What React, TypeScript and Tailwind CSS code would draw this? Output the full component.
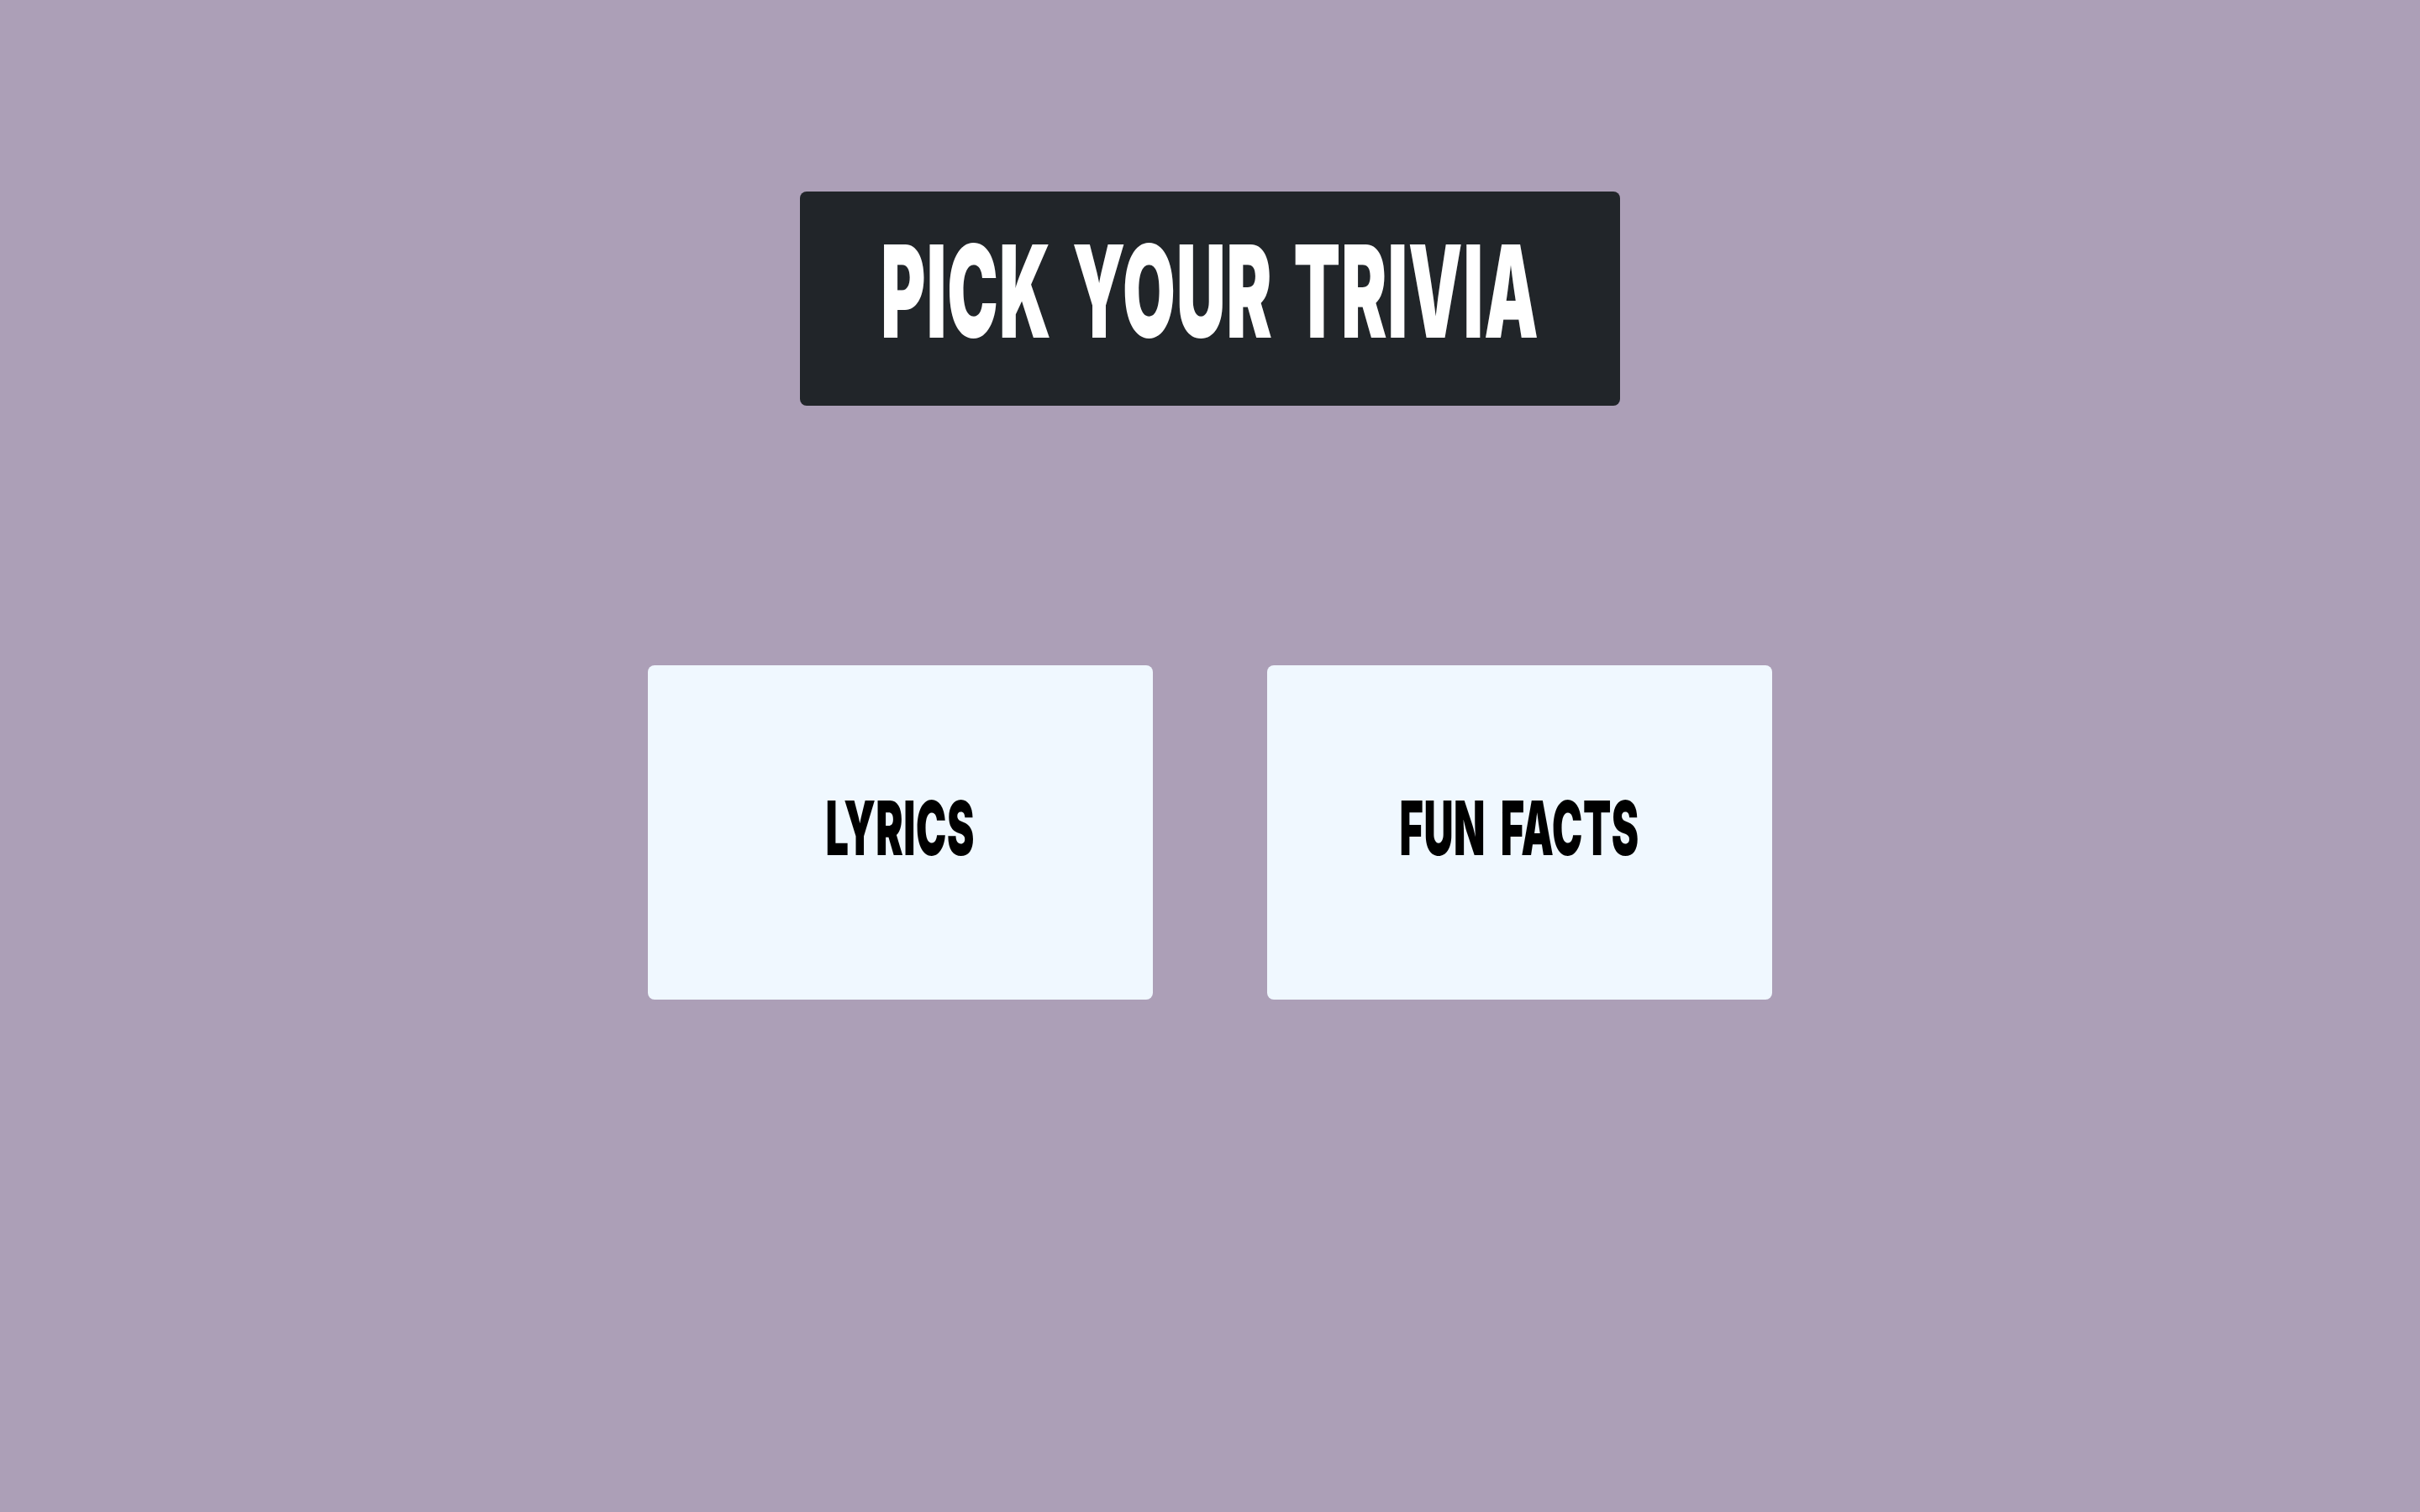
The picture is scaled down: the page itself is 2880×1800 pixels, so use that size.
export default function App() {
  return (
    <div className="min-h-screen w-full bg-[#ac9fb7] flex flex-col items-center pt-[228px] font-['Inter',sans-serif]">
      <div className="w-[976px] h-[255px] bg-[#212529] rounded-[8px] flex items-center justify-center pb-[18px]">
        <h1 className="inline-block scale-x-[0.53] text-white font-black text-[153px] leading-none tracking-[2px] [word-spacing:14px] whitespace-nowrap">
          PICK YOUR TRIVIA
        </h1>
      </div>

      <div className="mt-[309px] flex gap-[136px]">
        <button className="w-[601px] h-[398px] bg-[#f0f8ff] rounded-[8px] flex items-center justify-center pb-[10px]">
          <span className="inline-block scale-x-[0.54] text-black font-black text-[90px] leading-none tracking-[1px] [word-spacing:14px] whitespace-nowrap">
            LYRICS
          </span>
        </button>
        <button className="w-[601px] h-[398px] bg-[#f0f8ff] rounded-[8px] flex items-center justify-center pb-[10px]">
          <span className="inline-block scale-x-[0.54] text-black font-black text-[90px] leading-none tracking-[1px] [word-spacing:14px] whitespace-nowrap">
            FUN FACTS
          </span>
        </button>
      </div>
    </div>
  );
}
